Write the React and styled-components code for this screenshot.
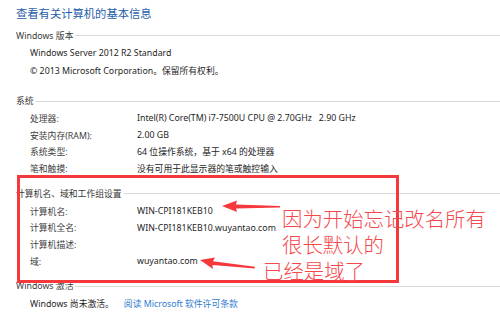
import React from 'react';
import styled, { createGlobalStyle } from 'styled-components';

const GlobalStyle = createGlobalStyle`
    html, body {
        margin: 0;
        padding: 0;
        background: #ffffff;
    }
    body {
        font-family: "Noto Sans", "Noto Sans CJK SC", sans-serif;
        font-size: 8.8px;
        color: #1e1e1e;
    }
`;

const sections = [
    {
        title: 'Windows 版本',
        gap: 3.5,
        rowHeight: 17.5,
        rows: [
            { value: 'Windows Server 2012 R2 Standard' },
            { value: '© 2013 Microsoft Corporation。保留所有权利。' },
        ],
    },
    {
        title: '系统',
        gap: 11.5,
        rowHeight: 16.7,
        rows: [
            { label: '处理器:', value: 'Intel(R) Core(TM) i7-7500U CPU @ 2.70GHz\u00a0\u00a0\u00a02.90 GHz' },
            { label: '安装内存(RAM):', value: '2.00 GB' },
            { label: '系统类型:', value: '64 位操作系统，基于 x64 的处理器' },
            { label: '笔和触摸:', value: '没有可用于此显示器的笔或触控输入' },
        ],
    },
    {
        title: '计算机名、域和工作组设置',
        gap: 7.2,
        rowHeight: 16.7,
        rows: [
            { label: '计算机名:', value: 'WIN-CPI181KEB10' },
            { label: '计算机全名:', value: 'WIN-CPI181KEB10.wuyantao.com' },
            { label: '计算机描述:', value: '' },
            { label: '域:', value: 'wuyantao.com' },
        ],
    },
];

function App() {
    return (
        <Page>
            <GlobalStyle />
            <Title>查看有关计算机的基本信息</Title>
            {sections.map((section, index) => (
                <Section key={index} gap={section.gap}>
                    <Heading>
                        <span>{section.title}</span>
                        <Rule />
                    </Heading>
                    {section.rows.map((row, i) => (
                        <Row key={i} h={section.rowHeight}>
                            {row.label !== undefined && <Label>{row.label}</Label>}
                            <Value>{row.value}</Value>
                        </Row>
                    ))}
                </Section>
            ))}
            <Section gap={6.7}>
                <Heading>
                    <span>Windows 激活</span>
                    <Rule />
                </Heading>
                <Row h={17}>
                    <Value>Windows 尚未激活。</Value>
                    <Link href="#">阅读 Microsoft 软件许可条款</Link>
                </Row>
            </Section>

            <Frame />
            <Arrows width="500" height="322" viewBox="0 0 500 322">
                <polygon points="222,206 237,200.5 236,204.5 280,206 280,207.6 236,208.6 237,212" fill="#f5383c" />
                <polygon points="200,260 215,257.5 213,261.2 255,266.8 254.6,268.4 212.4,265 213,269" fill="#f5383c" />
            </Arrows>
            <Note>
                <NoteLine>因为开始忘记改名所有</NoteLine>
                <NoteLine>很长默认的</NoteLine>
                <NoteLine shift>已经是域了</NoteLine>
            </Note>
        </Page>
    );
}

export default App;

const Page = styled.div`
    position: relative;
    width: 500px;
    height: 322px;
    overflow: hidden;
    background: #ffffff;
`;

const Title = styled.div`
    padding: 4px 0 0 16px;
    height: 18px;
    line-height: 18px;
    font-family: "Noto Sans CJK SC", sans-serif;
    font-size: 11.3px;
    color: #1f5ea8;
`;

const Section = styled.div`
    margin-top: ${props => props.gap}px;
`;

const Heading = styled.div`
    display: flex;
    align-items: center;
    gap: 2px;
    height: 19px;
    padding-left: 16px;
    color: #3a3a3a;
    white-space: nowrap;
`;

const Rule = styled.div`
    flex: 1;
    height: 1px;
    margin-top: 1px;
    background: #d9d9d9;
`;

const Row = styled.div`
    display: flex;
    align-items: center;
    height: ${props => props.h}px;
    padding-left: 30px;
    white-space: nowrap;
`;

const Label = styled.div`
    width: 107px;
    color: #404040;
`;

const Value = styled.div`
    color: #1e1e1e;
`;

const Link = styled.a`
    margin-left: 10px;
    color: #2f7bd0;
    text-decoration: none;
`;

const Frame = styled.div`
    position: absolute;
    left: 17px;
    top: 175px;
    width: 376px;
    height: 102px;
    border: 3px solid #f5383c;
`;

const Arrows = styled.svg`
    position: absolute;
    left: 0;
    top: 0;
`;

const Note = styled.div`
    position: absolute;
    left: 282px;
    top: 207.5px;
    font-family: "Noto Sans CJK SC", sans-serif;
    font-weight: 300;
    font-size: 20.4px;
    line-height: 21px;
    color: #f5484c;
    white-space: nowrap;
`;

const NoteLine = styled.div`
    height: 21px;
    margin-bottom: 5px;
    margin-left: ${props => props.shift ? '-19px' : '0'};
    margin-top: ${props => props.shift ? '5px' : '0'};
`;
